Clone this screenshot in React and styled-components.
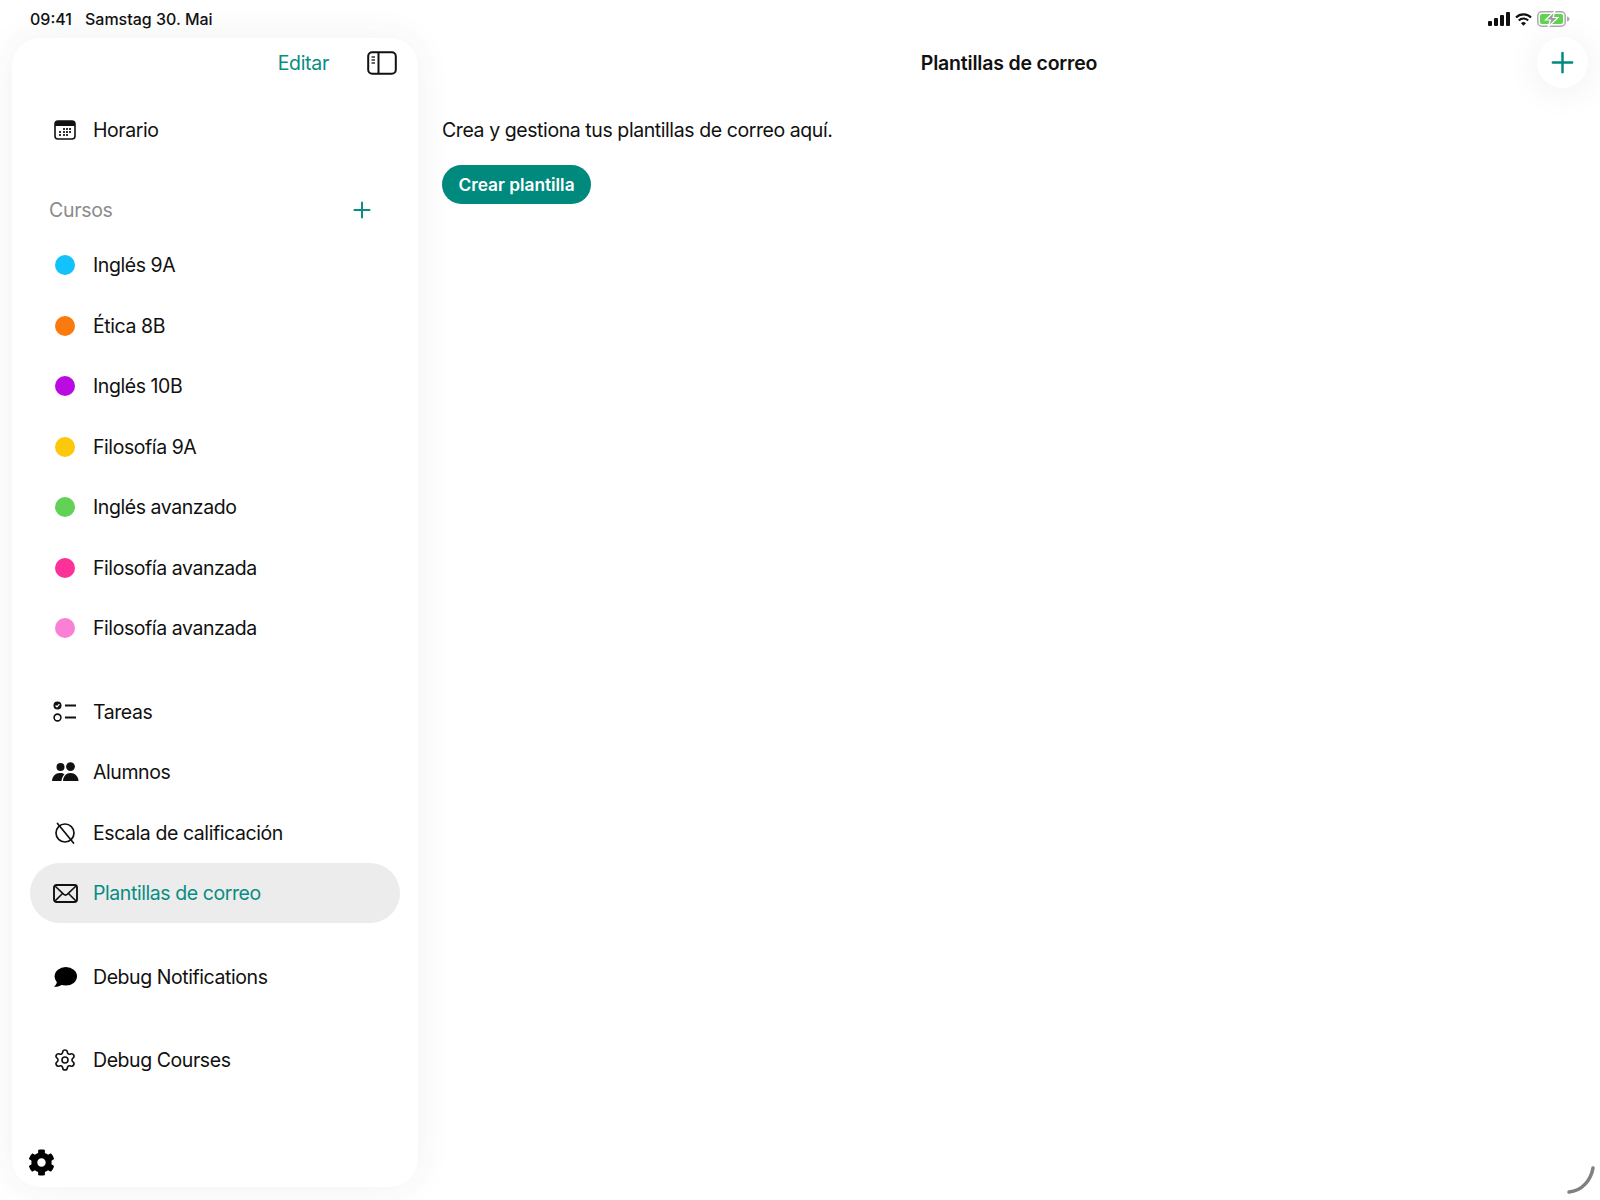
import styled, { createGlobalStyle } from 'styled-components';
import { Settings, Plus } from 'lucide-react';
import { FaCog } from 'react-icons/fa';

const GlobalStyle = createGlobalStyle`
    html, body {
        margin: 0;
        padding: 0;
        background: #fff;
    }
    body {
        font-family: Inter, "Liberation Sans", sans-serif;
        color: #111;
    }
`

const Page = styled.div`
    position: relative;
    width: 1600px;
    height: 1200px;
    overflow: hidden;
    display: flex;
    flex-direction: column;
`

const StatusBar = styled.div`
    height: 38px;
    flex: none;
    display: flex;
    align-items: center;
    padding: 0 30px 0 30px;
    box-sizing: border-box;
    font-size: 16px;
    font-weight: 500;
    gap: 13px;
    position: relative;
    z-index: 1;
`

const StatusIcons = styled.div`
    margin-left: auto;
    display: flex;
    align-items: center;
    gap: 5px;
`

const Content = styled.div`
    flex: 1;
    display: flex;
    min-height: 0;
`

const Sidebar = styled.aside`
    width: 406px;
    margin: 0 0 13px 12px;
    flex: none;
    background: #fff;
    border-radius: 28px;
    box-shadow: 0 0 36px rgba(40, 60, 60, 0.07);
    padding: 0 18px 11px;
    box-sizing: border-box;
    display: flex;
    flex-direction: column;
    position: relative;
`

const SideTop = styled.div`
    height: 50px;
    flex: none;
    display: flex;
    align-items: center;
    justify-content: flex-end;
    gap: 38px;
    padding-right: 3px;
`

const EditLink = styled.span`
    color: #078d81;
    font-size: 19.5px;
    letter-spacing: -0.3px;
`

const Row = styled.div`
    height: 60.5px;
    flex: none;
    display: flex;
    align-items: center;
    gap: 13px;
    padding-left: 20px;
    border-radius: 31px;
    font-size: 19.5px;
    letter-spacing: -0.43px;
    color: ${p => (p.$active ? '#078d81' : '#111')};
    background: ${p => (p.$active ? '#ececec' : 'transparent')};
`

const IconBox = styled.span`
    width: 30px;
    height: 30px;
    flex: none;
    display: flex;
    align-items: center;
    justify-content: center;
`

const Dot = styled.span`
    width: 20px;
    height: 20px;
    border-radius: 50%;
    background: ${p => p.$color};
`

const Group = styled.div`
    display: flex;
    flex-direction: column;
    margin-top: ${p => p.$gap}px;
`

const CourseHead = styled.div`
    height: 44px;
    margin: 27px 0 3.25px;
    display: flex;
    align-items: center;
    justify-content: space-between;
    padding: 0 25px 0 19px;
    font-size: 19.5px;
    letter-spacing: -0.3px;
    color: #8c8c8c;
    flex: none;
`

const BottomGear = styled.div`
    margin-top: auto;
    margin-left: -2px;
    display: flex;
    color: #000;
`

const Main = styled.main`
    flex: 1;
    display: flex;
    flex-direction: column;
    min-width: 0;
`

const MainTitle = styled.h1`
    height: 49px;
    margin: 0;
    display: flex;
    align-items: center;
    justify-content: center;
    font-size: 19.5px;
    font-weight: 600;
    letter-spacing: -0.2px;
`

const MainBody = styled.div`
    padding: 28px 0 0 24px;
    display: flex;
    flex-direction: column;
    align-items: flex-start;
`

const Intro = styled.p`
    margin: 0 0 20px;
    font-size: 19.5px;
    letter-spacing: -0.42px;
    line-height: 30px;
`

const CreateButton = styled.button`
    height: 39px;
    width: 149px;
    border: none;
    border-radius: 20px;
    background: #00897d;
    color: #fff;
    font-family: inherit;
    font-size: 17.3px;
    font-weight: 600;
    padding: 0;
`

const FloatButton = styled.button`
    position: absolute;
    top: 37px;
    right: 12px;
    width: 51px;
    height: 51px;
    border: none;
    border-radius: 50%;
    background: #fff;
    box-shadow: 0 3px 36px rgba(0, 0, 0, 0.07);
    color: #00897d;
    display: flex;
    align-items: center;
    justify-content: center;
    padding: 0;
`

const ScrollHint = styled.svg`
    position: absolute;
    right: 0;
    bottom: 4px;
`

const CalendarIcon = () => (
    <svg width="22" height="20" viewBox="0 0 22 20">
        <rect x="1" y="1" width="20" height="18" rx="3" fill="#fff" stroke="#111" strokeWidth="1.6" />
        <path d="M1 5a4 4 0 0 1 4-4h12a4 4 0 0 1 4 4v1H1z" fill="#111" />
        <g fill="#333">
            <rect x="9" y="8" width="2" height="2" /><rect x="12" y="8" width="2" height="2" /><rect x="15" y="8" width="2" height="2" />
            <rect x="5" y="11" width="2" height="2" /><rect x="9" y="11" width="2" height="2" /><rect x="12" y="11" width="2" height="2" /><rect x="15" y="11" width="2" height="2" />
            <rect x="5" y="14" width="2" height="2" /><rect x="9" y="14" width="2" height="2" /><rect x="12" y="14" width="2" height="2" />
        </g>
    </svg>
)

const PanelIcon = () => (
    <svg width="30" height="24" viewBox="0 0 30 24">
        <rect x="1.2" y="1.2" width="27.6" height="21.6" rx="4" fill="none" stroke="#111" strokeWidth="2" />
        <path d="M11.5 1.2v21.6" stroke="#111" strokeWidth="2" />
        <path d="M4.5 6h3.5M4.5 9h3.5M4.5 12h3.5" stroke="#333" strokeWidth="1.3" />
    </svg>
)

const TasksIcon = () => (
    <svg width="24" height="22" viewBox="0 0 24 22">
        <circle cx="4.5" cy="4.5" r="4" fill="#111" />
        <path d="M2.6 4.5l1.4 1.4 2.4-2.7" fill="none" stroke="#fff" strokeWidth="1.2" />
        <circle cx="4.5" cy="16.5" r="3.4" fill="none" stroke="#111" strokeWidth="1.6" />
        <path d="M12 4.5h11M12 16.500h11" stroke="#111" strokeWidth="1.8" />
    </svg>
)

const PeopleIcon = () => (
    <svg width="27" height="20" viewBox="0 0 27 20">
        <circle cx="8.5" cy="5" r="4" fill="#111" />
        <circle cx="18.5" cy="4.6" r="4.4" fill="#111" />
        <path d="M0 19c.3-4.6 3.4-8 8-8 1.8 0 3.300.5 4.500 1.400C10.600 14 9.600 16.300 9.500 19z" fill="#111" />
        <path d="M11 19c.2-4.600 3.200-8 7.500-8s7.800 3.400 8 8z" fill="#111" />
    </svg>
)

const ScaleIcon = () => (
    <svg width="24" height="24" viewBox="0 0 24 24" fill="none" stroke="#111" strokeWidth="1.7">
        <circle cx="12" cy="12" r="9" />
        <path d="M4.500 2.500 20.500 22" strokeLinecap="round" />
    </svg>
)

const MailIcon = () => (
    <svg width="25" height="19" viewBox="0 0 25 19" fill="none" stroke="#111" strokeWidth="1.9">
        <rect x="1" y="1" width="23" height="17" rx="2.500" />
        <path d="M2 2l8.500 8.200a3 3 0 0 0 4 0L23 2M2 17l7.500-7.500M23 17l-7.500-7.500" strokeWidth="1.600" />
    </svg>
)

const BubbleIcon = () => (
    <svg width="24" height="21" viewBox="0 0 24 21">
        <ellipse cx="12.800" cy="9.300" rx="11.200" ry="9.300" fill="#000" />
        <path d="M4 13c.3 2.500-.8 5-3 6.800 2.800.3 6-.5 8-2.300z" fill="#000" />
    </svg>
)

const SignalIcon = () => (
    <svg width="22" height="14" viewBox="0 0 22 14" fill="#111">
        <rect x="0" y="9" width="4" height="5" rx="1" />
        <rect x="6" y="6" width="4" height="8" rx="1" />
        <rect x="12" y="3" width="4" height="11" rx="1" />
        <rect x="18" y="0" width="4" height="14" rx="1" />
    </svg>
)

const WifiIcon = () => (
    <svg width="17" height="13" viewBox="0 0 17 13" fill="none" stroke="#111" strokeWidth="2.100">
        <path d="M1 4.500a10.500 10.500 0 0 1 15 0" />
        <path d="M3.800 7.500a6.500 6.500 0 0 1 9.400 0" />
        <path d="M8.500 12.800 6 10.300a3.500 3.500 0 0 1 5 0z" fill="#111" stroke="none" />
    </svg>
)

const BatteryIcon = () => (
    <svg width="33" height="16" viewBox="0 0 33 16">
        <rect x="0.8" y="0.8" width="27.400" height="14.400" rx="4" fill="#fff" stroke="#a9a9a9" strokeWidth="1.500" />
        <rect x="3" y="3" width="23" height="10" rx="2" fill="#5fd34e" />
        <path d="M30 5.500c1.500.3 2.500 1.300 2.500 2.500s-1 2.200-2.500 2.500z" fill="#a9a9a9" />
        <path d="M18 0 8.500 9h5l-2.500 7 10-9.500h-5z" fill="#9a9a9a" stroke="#fff" strokeWidth="1.200" />
    </svg>
)

const courses = [
    { name: 'Inglés 9A', color: '#12c2fb' },
    { name: 'Ética 8B', color: '#fb7a0e' },
    { name: 'Inglés 10B', color: '#bb0be0' },
    { name: 'Filosofía 9A', color: '#fcc80b' },
    { name: 'Inglés avanzado', color: '#62d256' },
    { name: 'Filosofía avanzada', color: '#fb3098' },
    { name: 'Filosofía avanzada', color: '#fb80d5' },
]

const tools = [
    { name: 'Tareas', icon: <TasksIcon /> },
    { name: 'Alumnos', icon: <PeopleIcon /> },
    { name: 'Escala de calificación', icon: <ScaleIcon /> },
    { name: 'Plantillas de correo', icon: <MailIcon />, active: true },
]

const App = () => {
    return (
        <Page>
            <GlobalStyle />
            <StatusBar>
                <span>09:41</span>
                <span>Samstag 30. Mai</span>
                <StatusIcons>
                    <SignalIcon />
                    <WifiIcon />
                    <BatteryIcon />
                </StatusIcons>
            </StatusBar>
            <Content>
                <Sidebar>
                    <SideTop>
                        <EditLink>Editar</EditLink>
                        <PanelIcon />
                    </SideTop>
                    <Group $gap={12}>
                        <Row><IconBox><CalendarIcon /></IconBox>Horario</Row>
                    </Group>
                    <CourseHead>
                        Cursos
                        <Plus size={26} color="#078d81" strokeWidth={1.8} />
                    </CourseHead>
                    <Group $gap={0}>
                        {courses.map((c, i) => (
                            <Row key={i}><IconBox><Dot $color={c.color} /></IconBox>{c.name}</Row>
                        ))}
                    </Group>
                    <Group $gap={23}>
                        {tools.map((t) => (
                            <Row key={t.name} $active={t.active}><IconBox>{t.icon}</IconBox>{t.name}</Row>
                        ))}
                    </Group>
                    <Group $gap={23.5}>
                        <Row><IconBox><BubbleIcon /></IconBox>Debug Notifications</Row>
                    </Group>
                    <Group $gap={22.5}>
                        <Row><IconBox><Settings size={24} strokeWidth={1.6} /></IconBox>Debug Courses</Row>
                    </Group>
                    <BottomGear><FaCog size={27} /></BottomGear>
                </Sidebar>
                <Main>
                    <MainTitle>Plantillas de correo</MainTitle>
                    <MainBody>
                        <Intro>Crea y gestiona tus plantillas de correo aquí.</Intro>
                        <CreateButton>Crear plantilla</CreateButton>
                    </MainBody>
                </Main>
            </Content>
            <FloatButton><Plus size={33} strokeWidth={1.8} /></FloatButton>
            <ScrollHint width="34" height="30" viewBox="0 0 34 30">
                <path d="M27 2C25 14 16 25 3 26" fill="none" stroke="#808080" strokeWidth="3.5" strokeLinecap="round" />
            </ScrollHint>
        </Page>
    );
}

export default App;
